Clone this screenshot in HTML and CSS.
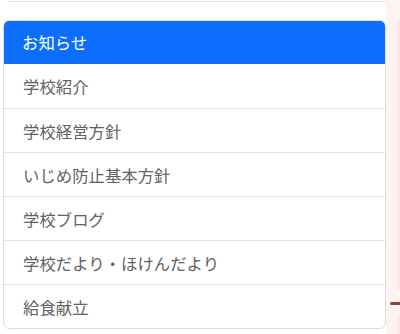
FILE: index.html
```html
<!DOCTYPE html>
<html lang="ja">
<head>
<meta charset="utf-8">
<link rel="stylesheet" href="styles.css">
</head>
<body>
<div class="page">
  <main class="main">
    <div class="prev"></div>
    <nav class="list">
      <div class="list-head">お知らせ</div>
      <a class="item">学校紹介</a>
      <a class="item">学校経営方針</a>
      <a class="item">いじめ防止基本方針</a>
      <a class="item">学校ブログ</a>
      <a class="item">学校だより・ほけんだより</a>
      <a class="item">給食献立</a>
    </nav>
  </main>
  <aside class="side">
    <div class="side-box"></div>
    <div class="side-bar"></div>
    <div class="side-box2"></div>
  </aside>
</div>
</body>
</html>
```
FILE: styles.css
```css
html, body {
  margin: 0;
  padding: 0;
  background: #ffffff;
}
body {
  font-family: "Noto Sans CJK JP", "Noto Sans", sans-serif;
  width: 400px;
  height: 334px;
  overflow: hidden;
}
.page {
  display: flex;
  height: 334px;
}
.main {
  width: 383px;
  padding-left: 3px;
  flex: none;
}
.prev {
  height: 1px;
  margin-left: 5px;
  border-bottom: 1px solid #e6e6e6;
  margin-bottom: 18px;
}
.list {
  display: flex;
  flex-direction: column;
  border: 1px solid #dedede;
  border-radius: 6px;
  overflow: hidden;
}
.list-head {
  background: #0d6efd;
  color: #ffffff;
  height: 44px;
  display: flex;
  align-items: center;
  padding-left: 19px;
  font-size: 16.4px;
  font-weight: 400;
  margin: -1px -1px 0 -1px;
}
.item {
  height: 43px;
  display: flex;
  align-items: center;
  padding-left: 19px;
  font-size: 16.4px;
  font-weight: 400;
  color: #626262;
  border-top: 1px solid #e3e3e3;
}
.list-head + .item {
  border-top: none;
  height: 44px;
}
.side {
  flex: 1;
  background: #fdf3f1;
  display: flex;
  flex-direction: column;
}
.side-box {
  margin: 20px 0 0 11px;
  height: 270px;
  background: #fbe8e5;
  border-radius: 6px 0 0 6px;
}
.side-bar {
  margin: 12px 0 0 4px;
  height: 3px;
  background: #8a4536;
  border-radius: 2px 0 0 2px;
}
.side-box2 {
  margin: 11px 0 0 11px;
  flex: 1;
  background: #fbe8e5;
  border-radius: 6px 0 0 0;
}
```
